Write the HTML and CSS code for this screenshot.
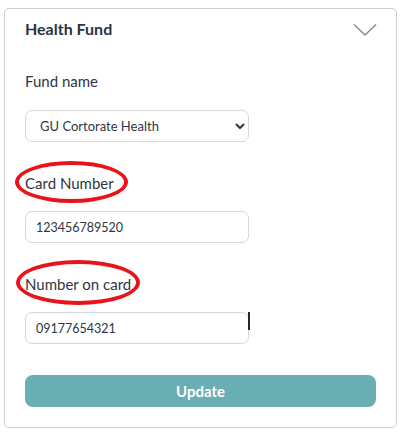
FILE: index.html
```html
<!DOCTYPE html>
<html>
<head>
<meta charset="utf-8">
<link rel="stylesheet" href="styles.css">
</head>
<body>
<div class="card">
  <div class="card-header">
    <span class="card-title">Health Fund</span>
    <svg class="chevron" width="24" height="14" viewBox="0 0 24 14"><path d="M1 1.5 L12 12 L23 1.5" fill="none" stroke="#8a8a8a" stroke-width="1.6"/></svg>
  </div>
  <label class="field-label first">Fund name</label>
  <select class="field select">
    <option>GU Cortorate Health</option>
  </select>
  <label class="field-label marked">Card Number<span class="mark mark-one"></span></label>
  <input class="field input" type="text" value="123456789520">
  <label class="field-label marked">Number on card<span class="mark mark-two"></span></label>
  <div class="input-wrap">
    <input class="field input" type="text" value="09177654321">
    <span class="cursor"></span>
  </div>
  <button class="update">Update</button>
</div>
</body>
</html>
```
FILE: styles.css
```css
html, body {
  margin: 0;
  padding: 0;
  background: #ffffff;
}
body {
  font-family: Lato, "Open Sans", sans-serif;
  color: #2e3440;
}
.card {
  margin: 8px 7px 0 4px;
  border: 1px solid #cfcfcf;
  border-radius: 5px;
  padding: 10px 20px 20px 20px;
  display: flex;
  flex-direction: column;
  align-items: flex-start;
  box-sizing: border-box;
  height: 420px;
}
.card-header {
  display: flex;
  justify-content: space-between;
  align-items: center;
  width: 100%;
  height: 20px;
}
.card-title {
  font-size: 16px;
  font-weight: 700;
  line-height: 20px;
  color: #2b3240;
}
.chevron {
  display: block;
  margin-right: -1px;
  margin-top: 2px;
}
.field-label {
  font-size: 15px;
  line-height: 20px;
  color: #2f3542;
  margin-top: 31px;
  position: relative;
}
.field-label.first {
  margin-top: 32px;
}
.mark {
  position: absolute;
  border: 4px solid #e8131b;
  border-radius: 50%;
  box-sizing: border-box;
}
.mark-one {
  left: -10px;
  top: -12px;
  width: 113px;
  height: 42px;
}
.mark-two {
  left: -9px;
  top: -14px;
  width: 124px;
  height: 45px;
}
.field {
  margin-top: 18px;
  width: 224px;
  height: 32px;
  box-sizing: border-box;
  border: 1px solid #d3d7de;
  border-radius: 7px;
  background: #fff;
  font-family: Lato, "Open Sans", sans-serif;
  font-size: 13px;
  color: #2f3542;
  outline: none;
}
.select {
  margin-top: 19px;
  padding: 0 8px 0 10px;
}
.input {
  padding: 0 10px;
  font-size: 12.5px;
}
.input-wrap {
  position: relative;
  margin-top: 18px;
}
.input-wrap .field {
  margin-top: 0;
  display: block;
}
.cursor {
  position: absolute;
  left: 223px;
  top: 0;
  width: 2px;
  height: 18px;
  background: #1d2a3a;
}
.update {
  margin-top: 31px;
  width: 100%;
  height: 32px;
  border: none;
  border-radius: 8px;
  background: #68aeb3;
  color: #ffffff;
  font-family: Lato, "Open Sans", sans-serif;
  font-size: 15px;
  font-weight: 700;
}
```
